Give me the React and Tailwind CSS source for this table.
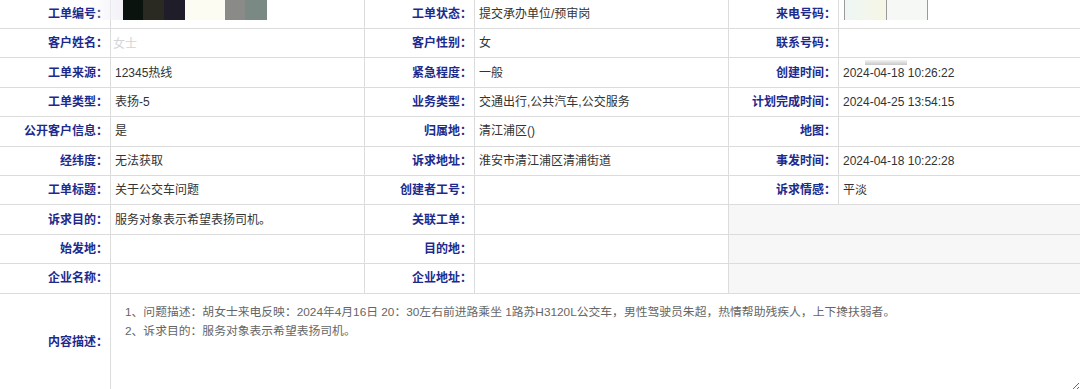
import React from 'react';

const rows = [
  [['工单编号', ''], ['工单状态', '提交承办单位/预审岗'], ['来电号码', '']],
  [['客户姓名', ''], ['客户性别', '女'], ['联系号码', '']],
  [['工单来源', '12345热线'], ['紧急程度', '一般'], ['创建时间', '2024-04-18 10:26:22']],
  [['工单类型', '表扬-5'], ['业务类型', '交通出行,公共汽车,公交服务'], ['计划完成时间', '2024-04-25 13:54:15']],
  [['公开客户信息', '是'], ['归属地', '清江浦区()'], ['地图', '']],
  [['经纬度', '无法获取'], ['诉求地址', '淮安市清江浦区清浦街道'], ['事发时间', '2024-04-18 10:22:28']],
  [['工单标题', '关于公交车问题'], ['创建者工号', ''], ['诉求情感', '平淡']],
  [['诉求目的', '服务对象表示希望表扬司机。'], ['关联工单', ''], null],
  [['始发地', ''], ['目的地', ''], null],
  [['企业名称', ''], ['企业地址', ''], null],
];

const font = { fontFamily: '"Liberation Sans", "Noto Sans CJK SC", sans-serif' };

const Label = ({ text, w }) => (
  <div className={`${w} shrink-0 h-full flex items-center justify-end pr-[2px] border-r border-[#dcdcdc] text-[12px] font-bold text-[#1d2a8c]`}>
    {text}：
  </div>
);

const Value = ({ text, w }) => (
  <div className={`${w} h-full flex items-center pl-[4px] border-r border-[#dcdcdc] text-[12px] text-[#333]`}>
    {text}
  </div>
);

// blurred-out personal data
const Mosaic = () => (
  <div className="absolute left-[92px] top-0 flex h-[20px]">
    <div className="w-[31px] bg-gradient-to-r from-[#ffffff00] to-[#f1f1f7]" />
    <div className="w-[20px] bg-[#0b130f]" />
    <div className="w-[21px] bg-[#2b2a22]" />
    <div className="w-[21px] bg-[#1f1d2a]" />
    <div className="w-[40px] bg-[#fcfcf2]" />
    <div className="w-[20px] bg-[#8a8a88]" />
    <div className="w-[22px] bg-[#7b8985]" />
  </div>
);

const PhoneMosaic = () => (
  <div className="absolute left-[844px] top-0 flex h-[20px]">
    <div className="w-[42px] bg-gradient-to-r from-[#eef6f6] to-[#f6f6e4] border-l border-[#9a9a9a]" />
    <div className="w-[42px] bg-[#f6f8f6] border-l border-r border-[#9a9a9a]" />
  </div>
);

export default function App() {
  return (
    <div className="relative w-[1080px] h-[389px] overflow-hidden bg-white" style={font}>
      {rows.map((r, i) => (
        <div
          key={i}
          className={`flex border-b border-[#dcdcdc] ${i === 0 ? 'h-[29px]' : 'h-[29.4px]'}`}
        >
          <Label text={r[0][0]} w="w-[111px]" />
          <Value text={r[0][1]} w="w-[254px]" />
          <Label text={r[1][0]} w="w-[110px]" />
          <Value text={r[1][1]} w="w-[254px]" />
          {r[2] ? (
            <>
              <Label text={r[2][0]} w="w-[110px]" />
              <div className="flex-1 h-full flex items-center pl-[4px] text-[12px] text-[#333]">{r[2][1]}</div>
            </>
          ) : (
            <div className="flex-1 h-full bg-[#f7f7f7]" />
          )}
        </div>
      ))}
      <div className="flex h-[97px]">
        <div className="w-[111px] shrink-0 h-full flex items-center justify-end pr-[2px] border-r border-[#dcdcdc] text-[12px] font-bold text-[#1d2a8c]">
          内容描述：
        </div>
        <textarea
          readOnly
          className="flex-1 h-full pt-[9px] pl-[14px] text-[11.8px] leading-[19px] text-[#666] outline-none"
          style={font}
          defaultValue={'1、问题描述：胡女士来电反映：2024年4月16日 20：30左右前进路乘坐 1路苏H3120L公交车，男性驾驶员朱超，热情帮助残疾人，上下搀扶弱者。\n2、诉求目的：服务对象表示希望表扬司机。'}
        />
      </div>
      <Mosaic />
      <PhoneMosaic />
      <div className="absolute left-[113px] top-[35px] text-[12px] text-[#d4d4d4]">女士</div>
      <div className="absolute left-[865px] top-[60px] w-[42px] h-[5px] bg-gradient-to-b from-[#f4f4f4] to-[#c8c8c8]" />
    </div>
  );
}
